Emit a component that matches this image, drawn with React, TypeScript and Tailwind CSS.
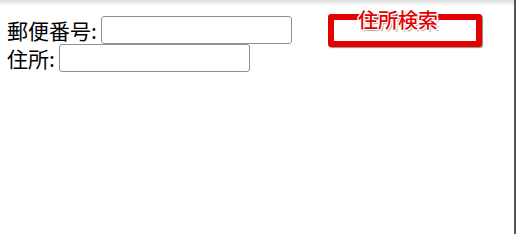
import React from "react";

export default function App() {
  return (
    <div className="w-[518px] h-[234px] bg-white overflow-hidden">
      <div className="relative w-[516px] h-[234px] border-r-2 border-[#555] bg-gradient-to-b from-[#dcdcdc] via-white via-[6px] to-white flex items-start pt-[14px] pl-[7px] text-black [font-family:'Noto_Sans_CJK_JP','Noto_Sans',sans-serif]">
        <form className="w-[321px] mt-[2px] flex flex-col text-[21px] leading-[28px]">
          <div className="flex items-center h-[28px]">
            <span>郵便番号:</span>
            <input
              type="text"
              className="ml-[4px] w-[191px] h-[28px] border border-[#8f8f9d] rounded-[3px] bg-white"
            />
          </div>
          <div className="flex items-center h-[28px]">
            <span>住所:</span>
            <input
              type="text"
              className="ml-[4px] w-[191px] h-[28px] border border-[#8f8f9d] rounded-[3px] bg-white"
            />
          </div>
        </form>
        <button
          type="button"
          className="relative w-[154px] h-[33px] border-[6px] border-[#e20000] rounded-[3px] bg-white shadow-[1px_1px_1px_rgba(0,0,0,0.45)]"
        >
          <span className="absolute left-0 right-[14px] top-[-10px] text-center text-[20px] leading-[20px] font-medium text-[#e20000] [text-shadow:1px_0_0_#fff,-1px_0_0_#fff,0_1px_0_#fff,0_-1px_0_#fff,1px_1px_0_#fff,-1px_-1px_0_#fff,1px_-1px_0_#fff,-1px_1px_0_#fff,2px_2px_1px_#aaa]">
            住所検索
          </span>
        </button>
      </div>
    </div>
  );
}
